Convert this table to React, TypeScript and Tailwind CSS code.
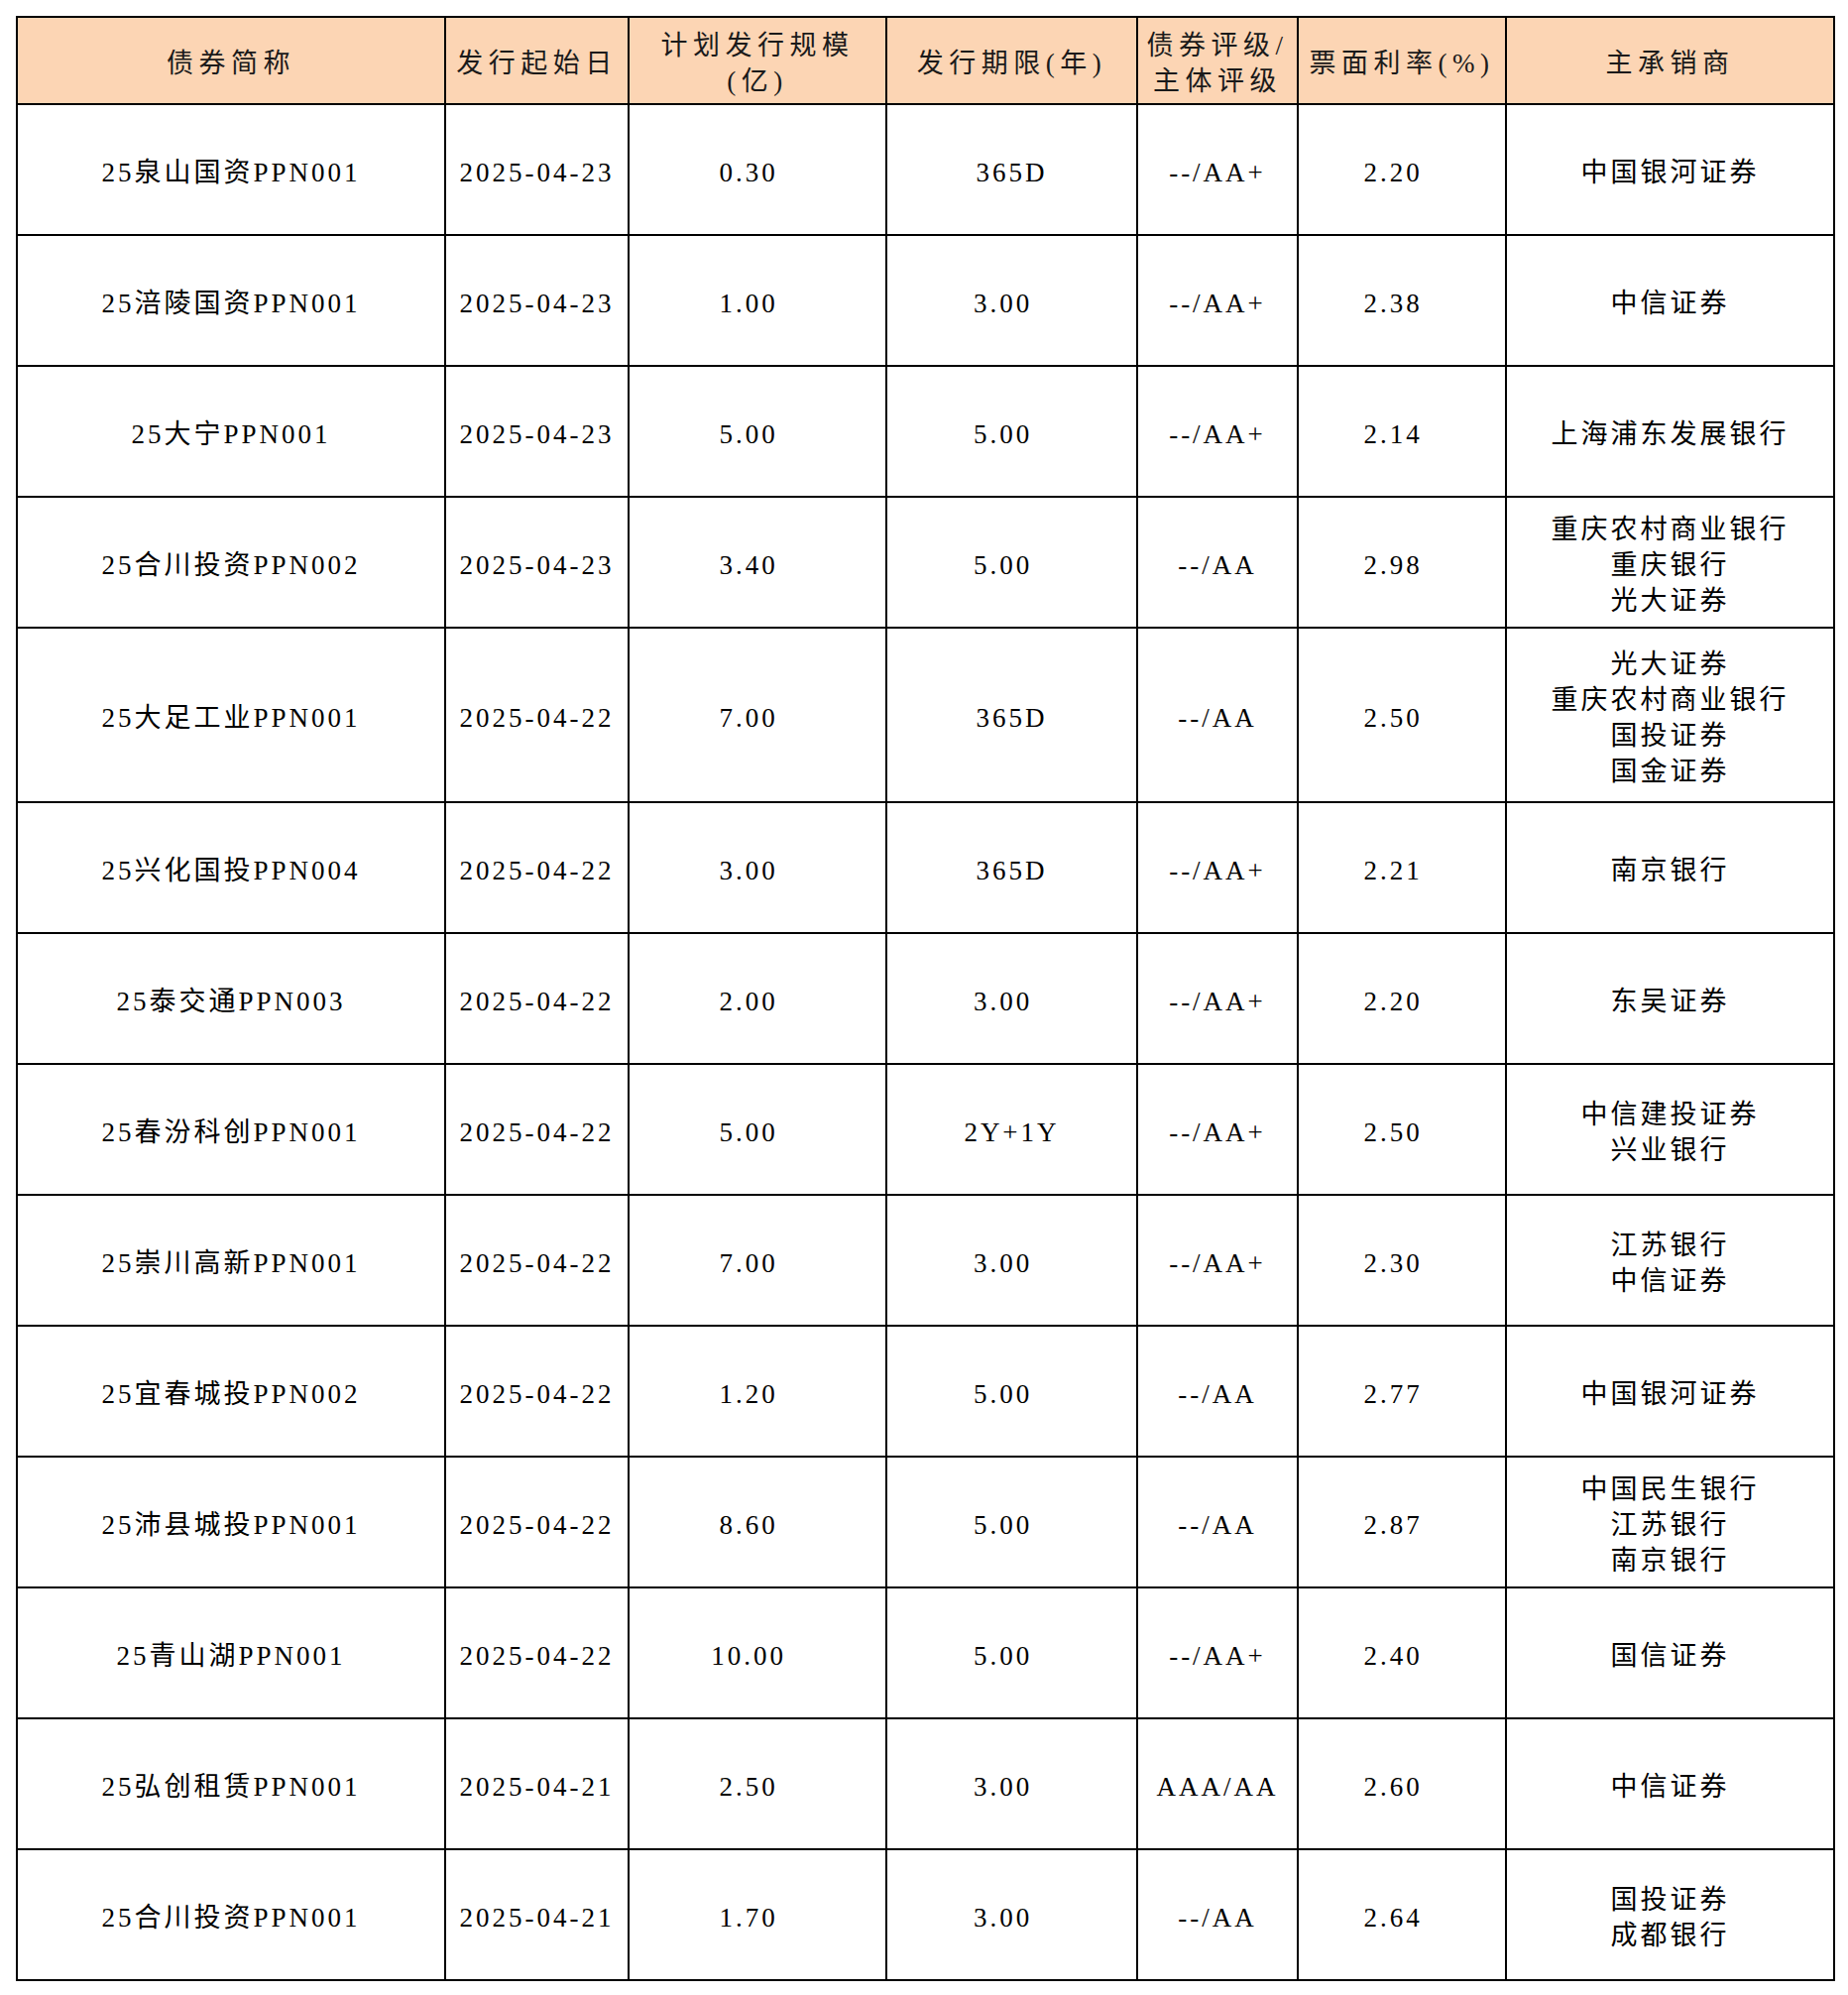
import React from "react";

type Bond = {
  name: string;
  date: string;
  size: string;
  term: string;
  rating: string;
  rate: string;
  underwriters: string[];
  tall?: boolean;
};

const bonds: Bond[] = [
  { name: "25泉山国资PPN001", date: "2025-04-23", size: "0.30", term: "365D", rating: "--/AA+", rate: "2.20", underwriters: ["中国银河证券"] },
  { name: "25涪陵国资PPN001", date: "2025-04-23", size: "1.00", term: "3.00", rating: "--/AA+", rate: "2.38", underwriters: ["中信证券"] },
  { name: "25大宁PPN001", date: "2025-04-23", size: "5.00", term: "5.00", rating: "--/AA+", rate: "2.14", underwriters: ["上海浦东发展银行"] },
  { name: "25合川投资PPN002", date: "2025-04-23", size: "3.40", term: "5.00", rating: "--/AA", rate: "2.98", underwriters: ["重庆农村商业银行", "重庆银行", "光大证券"] },
  { name: "25大足工业PPN001", date: "2025-04-22", size: "7.00", term: "365D", rating: "--/AA", rate: "2.50", underwriters: ["光大证券", "重庆农村商业银行", "国投证券", "国金证券"], tall: true },
  { name: "25兴化国投PPN004", date: "2025-04-22", size: "3.00", term: "365D", rating: "--/AA+", rate: "2.21", underwriters: ["南京银行"] },
  { name: "25泰交通PPN003", date: "2025-04-22", size: "2.00", term: "3.00", rating: "--/AA+", rate: "2.20", underwriters: ["东吴证券"] },
  { name: "25春汾科创PPN001", date: "2025-04-22", size: "5.00", term: "2Y+1Y", rating: "--/AA+", rate: "2.50", underwriters: ["中信建投证券", "兴业银行"] },
  { name: "25崇川高新PPN001", date: "2025-04-22", size: "7.00", term: "3.00", rating: "--/AA+", rate: "2.30", underwriters: ["江苏银行", "中信证券"] },
  { name: "25宜春城投PPN002", date: "2025-04-22", size: "1.20", term: "5.00", rating: "--/AA", rate: "2.77", underwriters: ["中国银河证券"] },
  { name: "25沛县城投PPN001", date: "2025-04-22", size: "8.60", term: "5.00", rating: "--/AA", rate: "2.87", underwriters: ["中国民生银行", "江苏银行", "南京银行"] },
  { name: "25青山湖PPN001", date: "2025-04-22", size: "10.00", term: "5.00", rating: "--/AA+", rate: "2.40", underwriters: ["国信证券"] },
  { name: "25弘创租赁PPN001", date: "2025-04-21", size: "2.50", term: "3.00", rating: "AAA/AA", rate: "2.60", underwriters: ["中信证券"] },
  { name: "25合川投资PPN001", date: "2025-04-21", size: "1.70", term: "3.00", rating: "--/AA", rate: "2.64", underwriters: ["国投证券", "成都银行"] },
];

const cell = "border-2 border-black text-center align-middle pt-[6px] px-0 pb-0";
const head = "border-2 border-black text-center align-middle pt-[6px] px-0 pb-0 font-normal tracking-[5.5px]";

// plain decimals sit a little left of centre in the source sheet
const numCell = (v: string) => (/^\d+\.\d+$/.test(v) ? `${cell} pr-[18px]` : cell);

export default function App() {
  return (
    <div
      className="w-[1864px] min-h-[2012px] bg-white pt-[16px] pl-[16px] text-[27px] leading-[36px] tracking-[3px] text-black"
      style={{ fontFamily: '"Liberation Serif", "Noto Sans CJK SC", serif' }}
    >
      <table className="table-fixed border-collapse w-[1833px]">
        <colgroup>
          <col className="w-[432px]" />
          <col className="w-[185px]" />
          <col className="w-[260px]" />
          <col className="w-[253px]" />
          <col className="w-[162px]" />
          <col className="w-[210px]" />
          <col className="w-[331px]" />
        </colgroup>
        <thead>
          <tr className="h-[88px] bg-[#fcd5b4] text-[#1a1a1a]">
            <th className={head}>债券简称</th>
            <th className={head}>发行起始日</th>
            <th className={head}>
              计划发行规模
              <br />
              (亿)
            </th>
            <th className={head}>发行期限(年)</th>
            <th className={`${head} tracking-[3px]`}>
              债券评级/
              <br />
              主体评级
            </th>
            <th className={`${head} tracking-[3px]`}>票面利率(%)</th>
            <th className={head}>主承销商</th>
          </tr>
        </thead>
        <tbody>
          {bonds.map((b) => (
            <tr key={b.name} className={b.tall ? "h-[176px]" : "h-[132px]"}>
              <td className={cell}>{b.name}</td>
              <td className={cell}>{b.date}</td>
              <td className={numCell(b.size)}>{b.size}</td>
              <td className={numCell(b.term)}>{b.term}</td>
              <td className={cell}>{b.rating}</td>
              <td className={numCell(b.rate)}>{b.rate}</td>
              <td className={cell}>
                {b.underwriters.map((u) => (
                  <div key={u}>{u}</div>
                ))}
              </td>
            </tr>
          ))}
        </tbody>
      </table>
    </div>
  );
}
